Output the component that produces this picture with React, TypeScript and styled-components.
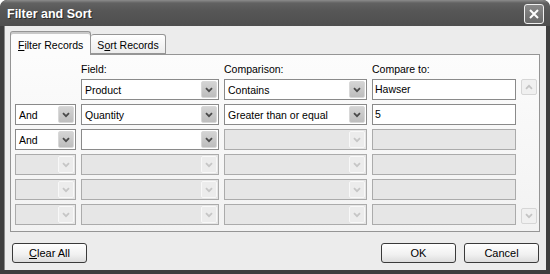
import React from "react";
import styled, { createGlobalStyle } from "styled-components";

const Global = createGlobalStyle`
  html, body { margin: 0; padding: 0; background: #ffffff; }
  body { font-family: "Liberation Sans", Arial, sans-serif; font-size: 10.5px; color: #000; }
`;

const Window = styled.div`
  width: 550px;
  height: 274px;
  box-sizing: border-box;
  display: flex;
  flex-direction: column;
  background: #3e3e3e;
  border-radius: 7px 7px 0 0;
  padding: 0 4px 4px 4px;
  overflow: hidden;
`;

const TitleBar = styled.div`
  height: 28px;
  margin: 0 -4px;
  padding: 0 6px 0 7px;
  display: flex;
  align-items: center;
  justify-content: space-between;
  background: linear-gradient(#8c8c8c 0px, #626262 3px, #575757 40%, #4e4e4e 100%);
  border-radius: 7px 7px 0 0;
`;

const Title = styled.span`
  color: #ffffff;
  font-weight: bold;
  font-size: 12.5px;
  text-shadow: 1px 1px 0 #2a2a2a;
  margin-top: 1px;
`;

const CloseButton = styled.div`
  width: 18px;
  height: 18px;
  border: 1px solid #f0f0f0;
  border-radius: 3px;
  background: linear-gradient(#8a8a8a, #6a6a6a);
  display: flex;
  align-items: center;
  justify-content: center;
  margin-top: 1px;
`;

const Client = styled.div`
  flex: 1;
  background: #ececec;
  display: flex;
  flex-direction: column;
  padding: 5px 7px 7px 5px;
  border-left: 1px solid #8a8a8a;
`;

const TabStrip = styled.div`
  display: flex;
  align-items: flex-end;
  height: 23px;
  position: relative;
  z-index: 1;
`;

const Tab = styled.div<{ $active?: boolean }>`
  box-sizing: border-box;
  height: ${(p) => (p.$active ? "24px" : "20px")};
  margin-bottom: ${(p) => (p.$active ? "-1px" : "0")};
  padding: ${(p) => (p.$active ? "3px 7px 0" : "1px 6px 0")};
  display: flex;
  align-items: center;
  border: 1px solid #959595;
  border-bottom: ${(p) => (p.$active ? "none" : "1px solid #959595")};
  border-left: ${(p) => (p.$active ? "1px solid #959595" : "none")};
  border-radius: 3px 3px 0 0;
  background: ${(p) =>
    p.$active ? "#fcfcfc" : "linear-gradient(#ffffff, #ececec)"};
  box-shadow: ${(p) => (p.$active ? "inset 0 2px 0 #c8c8c8" : "none")};
  white-space: nowrap;
`;

const Panel = styled.div`
  box-sizing: border-box;
  width: 530px;
  height: 178px;
  border: 1px solid #959595;
  background: linear-gradient(#fcfcfc, #f2f2f2);
  padding: 6px 1px 0 4px;
  display: grid;
  grid-template-columns: 61px 138px 143px 144px 16px;
  grid-template-rows: 14px repeat(6, 21px);
  column-gap: 5px;
  row-gap: 4px;
  align-items: stretch;
`;

const Label = styled.div<{ $col: number }>`
  grid-column: ${(p) => p.$col};
  grid-row: 1;
  line-height: 14px;
  margin-top: 1px;
`;

const Combo = styled.div<{ $disabled?: boolean; $row: number; $col: number }>`
  grid-row: ${(p) => p.$row};
  grid-column: ${(p) => p.$col};
  box-sizing: border-box;
  border: 1px solid ${(p) => (p.$disabled ? "#ababab" : "#8a8a8a")};
  background: ${(p) => (p.$disabled ? "#e6e6e6" : "#ffffff")};
  display: flex;
  align-items: center;
  padding: 1px;
  min-width: 0;
`;

const ComboText = styled.span`
  flex: 1;
  padding-left: 2px;
  white-space: nowrap;
  overflow: hidden;
`;

const ArrowButton = styled.div<{ $disabled?: boolean }>`
  box-sizing: border-box;
  width: 16px;
  height: 17px;
  border: 1px solid ${(p) => (p.$disabled ? "#f8f8f8" : "#d8d8d8")};
  border-radius: 2px;
  background: ${(p) =>
    p.$disabled ? "#ececec" : "linear-gradient(#d4d4d4, #bdbdbd)"};
  display: flex;
  align-items: center;
  justify-content: center;
`;

const TextBox = styled.div<{ $disabled?: boolean; $row: number }>`
  grid-row: ${(p) => p.$row};
  grid-column: 4;
  box-sizing: border-box;
  border: 1px solid ${(p) => (p.$disabled ? "#ababab" : "#8a8a8a")};
  background: ${(p) => (p.$disabled ? "#e6e6e6" : "#ffffff")};
  padding: 2px 2px 0 2px;
  line-height: 14px;
`;

const ScrollBar = styled.div`
  grid-column: 5;
  grid-row: 2 / span 6;
  display: flex;
  flex-direction: column;
  justify-content: space-between;
  padding-bottom: 1px;
`;

const ScrollButton = styled.div`
  box-sizing: border-box;
  width: 16px;
  height: 16px;
  border: 1px solid #d6d6d6;
  border-radius: 2px;
  background: #f0f0f0;
  display: flex;
  align-items: center;
  justify-content: center;
`;

const Footer = styled.div`
  display: flex;
  align-items: center;
  margin-top: 11px;
  padding-left: 2px;
`;

const Spacer = styled.div`
  flex: 1;
`;

const Button = styled.div<{ $gap?: number }>`
  box-sizing: border-box;
  width: 75px;
  height: 20px;
  border: 1px solid #3a3a3a;
  border-radius: 3px;
  background: linear-gradient(#ffffff, #f0f0f0 60%, #dcdcdc);
  display: flex;
  align-items: center;
  justify-content: center;
  font-size: 11px;
  margin-left: ${(p) => p.$gap ?? 0}px;
`;

const Chevron = ({ dir = "down", color }: { dir?: "up" | "down"; color: string }) => (
  <svg width="8" height="6" viewBox="0 0 8 6">
    <path
      d={dir === "down" ? "M1 1.2 L4 4.2 L7 1.2" : "M1 4.8 L4 1.8 L7 4.8"}
      fill="none"
      stroke={color}
      strokeWidth="1.8"
    />
  </svg>
);

type ComboProps = { text?: string; disabled?: boolean; row: number; col: number };
const ComboBox = ({ text, disabled, row, col }: ComboProps) => (
  <Combo $disabled={disabled} $row={row} $col={col}>
    <ComboText>{text}</ComboText>
    <ArrowButton $disabled={disabled}>
      <Chevron color={disabled ? "#c6c6c6" : "#4a4a4a"} />
    </ArrowButton>
  </Combo>
);

type Row = {
  op: string | null;
  field: string;
  comp: string;
  value: string;
  opDisabled?: boolean;
  fieldDisabled?: boolean;
  compDisabled?: boolean;
  valueDisabled?: boolean;
};

const off = { opDisabled: true, fieldDisabled: true, compDisabled: true, valueDisabled: true };

const rows: Row[] = [
  { op: null, field: "Product", comp: "Contains", value: "Hawser" },
  { op: "And", field: "Quantity", comp: "Greater than or equal", value: "5" },
  { op: "And", field: "", comp: "", value: "", compDisabled: true, valueDisabled: true },
  { op: "", field: "", comp: "", value: "", ...off },
  { op: "", field: "", comp: "", value: "", ...off },
  { op: "", field: "", comp: "", value: "", ...off },
];

export default function App() {
  return (
    <>
      <Global />
      <Window>
        <TitleBar>
          <Title>Filter and Sort</Title>
          <CloseButton>
            <svg width="12" height="12" viewBox="0 0 12 12">
              <path d="M2 2 L10 10 M10 2 L2 10" stroke="#ffffff" strokeWidth="2" />
            </svg>
          </CloseButton>
        </TitleBar>
        <Client>
          <TabStrip>
            <Tab $active>
              <span><u>F</u>ilter Records</span>
            </Tab>
            <Tab>
              <span>S<u>o</u>rt Records</span>
            </Tab>
          </TabStrip>
          <Panel>
            <Label $col={2}>Field:</Label>
            <Label $col={3}>Comparison:</Label>
            <Label $col={4}>Compare to:</Label>
            {rows.map((r, i) => (
              <React.Fragment key={i}>
                {r.op !== null && (
                  <ComboBox text={r.op} disabled={r.opDisabled} row={i + 2} col={1} />
                )}
                <ComboBox text={r.field} disabled={r.fieldDisabled} row={i + 2} col={2} />
                <ComboBox text={r.comp} disabled={r.compDisabled} row={i + 2} col={3} />
                <TextBox $disabled={r.valueDisabled} $row={i + 2}>{r.value}</TextBox>
              </React.Fragment>
            ))}
            <ScrollBar>
              <ScrollButton>
                <Chevron dir="up" color="#c4c4c4" />
              </ScrollButton>
              <ScrollButton>
                <Chevron color="#c4c4c4" />
              </ScrollButton>
            </ScrollBar>
          </Panel>
          <Footer>
            <Button>
              <span><u>C</u>lear All</span>
            </Button>
            <Spacer />
            <Button>OK</Button>
            <Button $gap={8}>Cancel</Button>
          </Footer>
        </Client>
      </Window>
    </>
  );
}
